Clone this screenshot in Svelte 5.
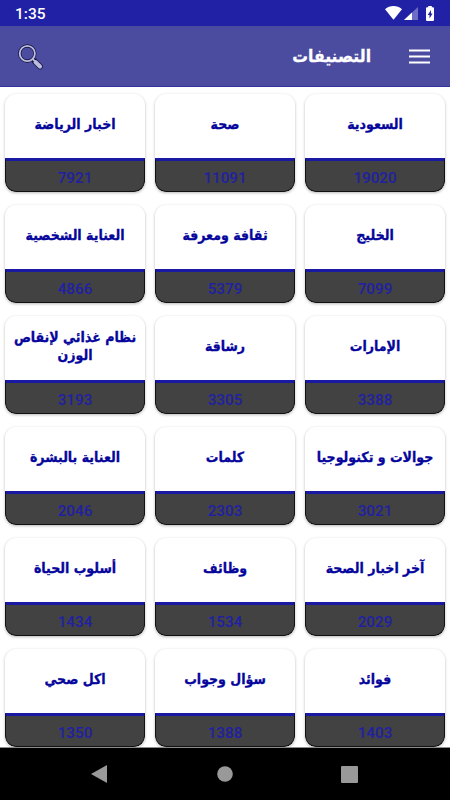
<script>
  // Categories in reading order (right to left)
  let categories = [
    { name: 'السعودية', count: 19020 },
    { name: 'صحة', count: 11091 },
    { name: 'اخبار الرياضة', count: 7921 },
    { name: 'الخليج', count: 7099 },
    { name: 'ثقافة ومعرفة', count: 5379 },
    { name: 'العناية الشخصية', count: 4866 },
    { name: 'الإمارات', count: 3388 },
    { name: 'رشاقة', count: 3305 },
    { name: 'نظام غذائي لإنقاص الوزن', count: 3193 },
    { name: 'جوالات و تكنولوجيا', count: 3021 },
    { name: 'كلمات', count: 2303 },
    { name: 'العناية بالبشرة', count: 2046 },
    { name: 'آخر اخبار الصحة', count: 2029 },
    { name: 'وظائف', count: 1534 },
    { name: 'أسلوب الحياة', count: 1434 },
    { name: 'فوائد', count: 1403 },
    { name: 'سؤال وجواب', count: 1388 },
    { name: 'اكل صحي', count: 1350 }
  ];
</script>

<div class="screen">
  <div class="status-bar">
    <span class="time">1:35</span>
    <svg class="status-icons" width="50" height="16" viewBox="0 0 50 16">
      <path d="M0 3.2C4.8-1 12.2-1 17 3.2L8.5 13.7Z" fill="#fff" />
      <path d="M33 1V14H19Z" fill="#fff" fill-opacity="0.35" />
      <path d="M27 6.5V14H19Z" fill="#fff" />
      <path d="M43.2 1.3V0h3.6v1.3H48q1 0 1 1V14q0 1-1 1h-6q-1 0-1-1V2.3q0-1 1-1z" fill="#fff" />
      <path d="M46 4L42.7 9H44.5V12.5L47.6 7.5H46Z" fill="#2121a5" />
    </svg>
  </div>

  <header class="toolbar">
    <button aria-label="بحث">
      <svg width="26" height="26" viewBox="0 0 26 26">
        <path d="M17 17.5L22 22.5" stroke="#0d0d3c" stroke-width="5.6" stroke-linecap="round" />
        <circle cx="9.3" cy="9.5" r="7.6" fill="none" stroke="#0d0d3c" stroke-width="3.2" />
        <path d="M14.7 15L17 17.3" stroke="#bcbcdc" stroke-width="1.8" />
        <path d="M17.7 18.2L22 22.5" stroke="#bcbcdc" stroke-width="4.2" stroke-linecap="round" />
        <circle cx="9.3" cy="9.5" r="7.6" fill="none" stroke="#bcbcdc" stroke-width="1.9" />
      </svg>
    </button>
    <h1>التصنيفات</h1>
    <button aria-label="القائمة">
      <svg width="21" height="16" viewBox="0 0 21 16">
        <path d="M0 1.5h21M0 7.5h21M0 13.5h21" stroke="#fff" stroke-width="2.2" />
      </svg>
    </button>
  </header>

  <main class="grid" dir="rtl">
    {#each categories as category}
      <div class="card">
        <div class="name"><span>{category.name}</span></div>
        <div class="count">{category.count}</div>
      </div>
    {/each}
  </main>

  <nav class="nav-bar">
    <svg width="16" height="18" viewBox="0 0 16 18"><path d="M16 0V18L0 9Z" fill="#999" /></svg>
    <svg width="17" height="16" viewBox="0 0 17 16"><circle cx="9" cy="8" r="7.8" fill="#999" /></svg>
    <svg width="17" height="17" viewBox="0 0 17 17"><rect width="17" height="17" rx="1" fill="#999" /></svg>
  </nav>
</div>

<style>
  :global(body) {
    margin: 0;
  }
  .screen {
    width: 450px;
    height: 800px;
    display: flex;
    flex-direction: column;
    overflow: hidden;
    background: #fff;
    font-family: Roboto, "DejaVu Sans", sans-serif;
  }
  .status-bar {
    flex: none;
    height: 26px;
    box-sizing: border-box;
    padding: 1px 15px 0 15px;
    display: flex;
    align-items: center;
    justify-content: space-between;
    background: #2121a5;
    color: #fff;
  }
  .time {
    font-size: 15.5px;
    font-weight: 500;
    line-height: 24px;
  }
  .toolbar {
    flex: none;
    height: 61px;
    box-sizing: border-box;
    padding: 0 20px 0 18px;
    display: flex;
    align-items: center;
    background: #4b4b9f;
    border-bottom: 1px solid #3232a0;
    color: #fff;
  }
  .toolbar button {
    display: flex;
    padding: 1px 0 0;
    border: none;
    background: none;
  }
  .toolbar h1 {
    flex: 1;
    margin: 0 38px 0 0;
    text-align: right;
    direction: ltr;
    font-family: "DejaVu Sans", sans-serif;
    font-stretch: condensed;
    font-size: 17.4px;
    font-weight: bold;
    line-height: 28px;
    -webkit-text-stroke: 0.3px #fff;
  }
  .grid {
    flex: 1;
    min-height: 0;
    overflow: hidden;
    padding: 7px 5px 0;
    display: grid;
    grid-template-columns: repeat(3, 140px);
    grid-auto-rows: 98px;
    gap: 13px 10px;
  }
  .card {
    display: flex;
    flex-direction: column;
    overflow: hidden;
    border-radius: 11px;
    background: #fff;
    box-shadow: 0 1px 3px rgba(0, 0, 0, 0.28);
  }
  .name {
    flex: none;
    height: 64px;
    box-sizing: border-box;
    padding-bottom: 4px;
    display: flex;
    align-items: center;
    justify-content: center;
    color: #06069c;
    font-family: "DejaVu Sans", sans-serif;
    font-stretch: condensed;
    font-size: 14px;
    font-weight: bold;
    line-height: 18px;
    text-align: center;
    -webkit-text-stroke: 0.3px #06069c;
  }
  .count {
    flex: none;
    height: 34px;
    box-sizing: border-box;
    border: 1px solid #111;
    border-top: 3px solid #1919a4;
    border-radius: 0 0 11px 11px;
    padding-top: 4px;
    background: #424242;
    color: #2020a5;
    font-size: 15.2px;
    font-weight: 500;
    line-height: 26px;
    text-align: center;
  }
  .nav-bar {
    flex: none;
    height: 53px;
    box-sizing: border-box;
    border-top: 1px solid #8c8c8c;
    padding: 0 92px 0 91px;
    display: flex;
    align-items: center;
    justify-content: space-between;
    background: #000;
  }
</style>
